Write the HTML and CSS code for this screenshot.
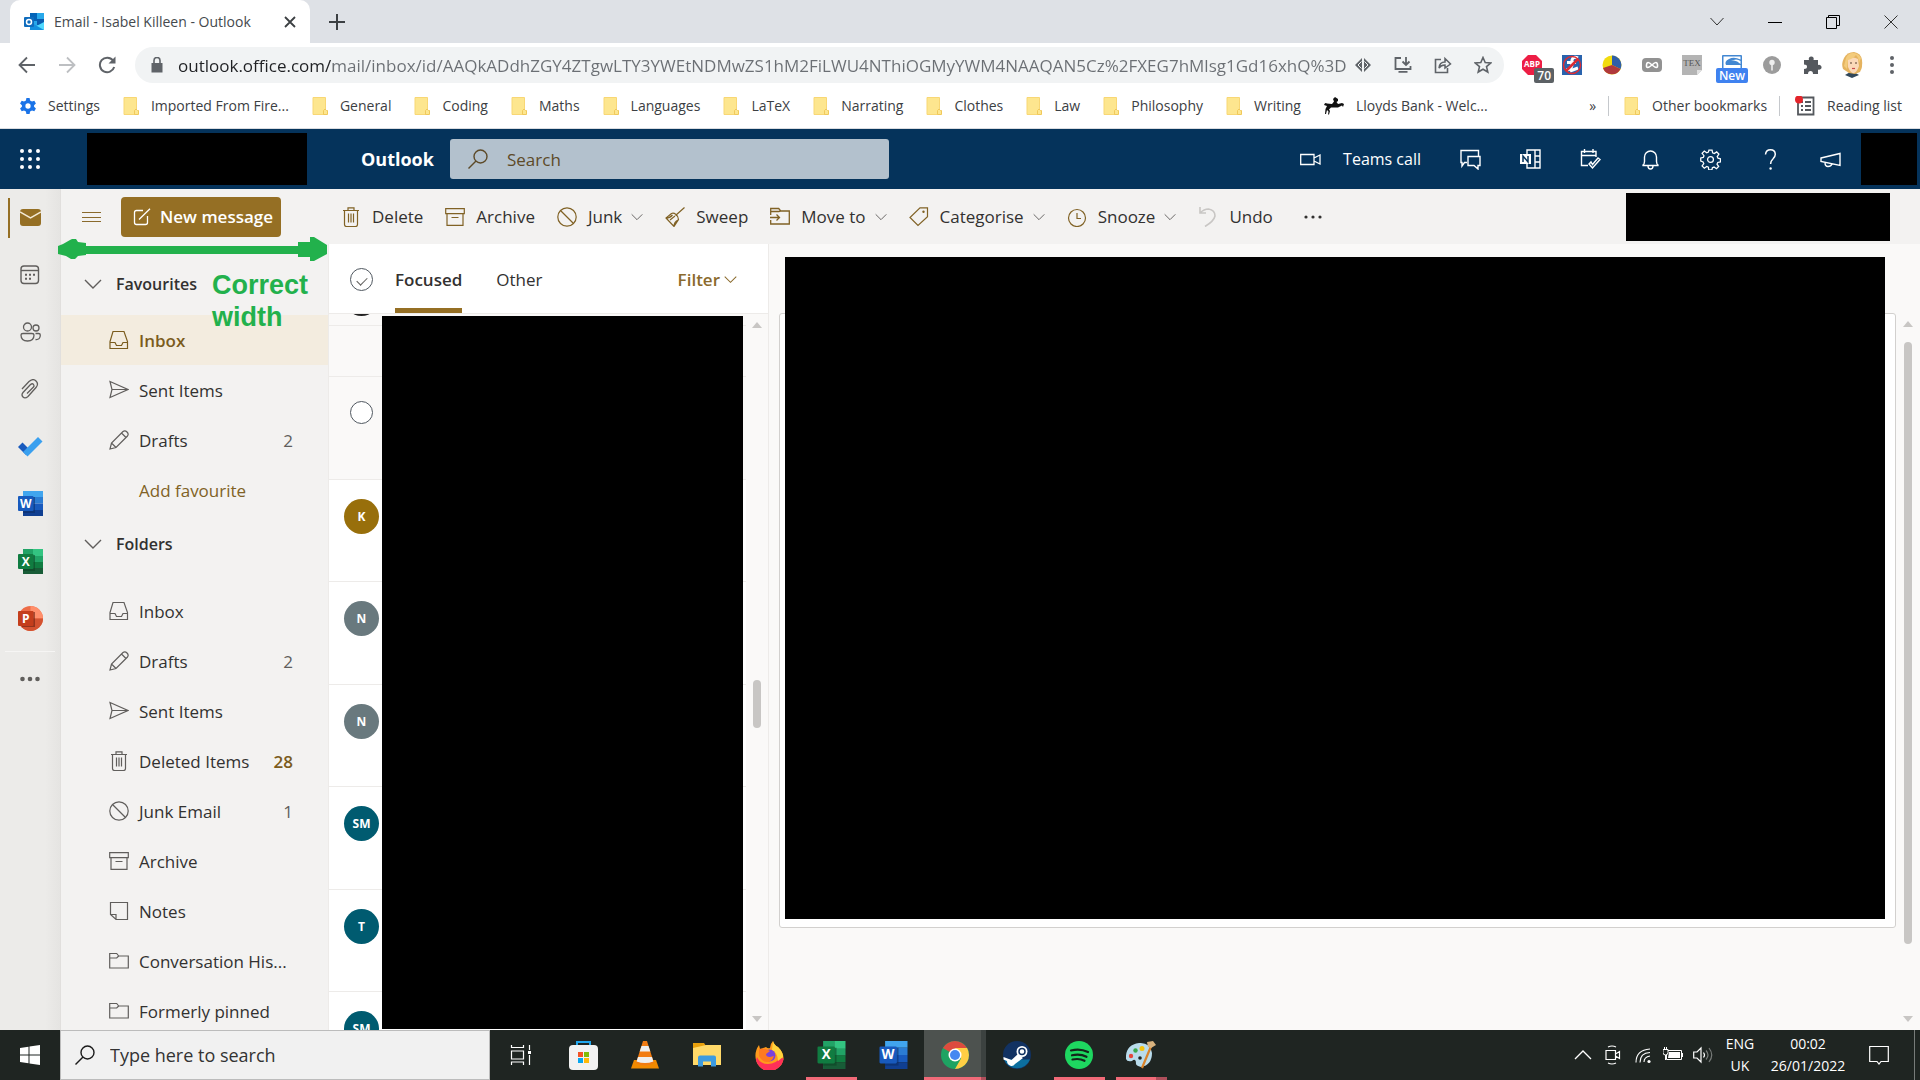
FILE: index.html
```html
<!DOCTYPE html>
<html lang="en-GB">
<head>
  <meta charset="UTF-8" />
  <meta name="viewport" content="width=device-width, initial-scale=1.0" />
  <title>Email - Isabel Killeen - Outlook</title>
  <link rel="stylesheet" href="styles.css">
</head>
<body>
  <!-- Shared icons -->
  <svg class="sprite" aria-hidden="true">
    <symbol id="folder-tab" viewBox="0 0 16 18"><path d="M1 .5h12.500v17H1z" fill="#fde68f" stroke="#f8d775"/><path d="M11.500 17.500v-4q1.500-3 3 0h1v4z" fill="#fde68f" stroke="#f0c95a"/></symbol>
    <symbol id="chevron" viewBox="0 0 18 12"><path d="M1 2l8 8 8-8" fill="none" stroke="currentColor" stroke-width="1.400"/></symbol>
    <symbol id="search" viewBox="0 0 20 20"><circle cx="12.500" cy="7.500" r="6.500" fill="none" stroke="currentColor" stroke-width="1.400"/><path d="M8 12l-7.500 7.500" stroke="currentColor" stroke-width="1.400"/></symbol>
    <symbol id="inbox" viewBox="0 0 20 20"><path d="M1 18.500v-7L4 1.500h11l3.500 10v7zM1 12.500h5l1.500 3h5l1.500-3h4.500" fill="none" stroke="currentColor" stroke-width="1.200"/></symbol>
    <symbol id="sent" viewBox="0 0 20 20"><path d="M1 1.500L19 9.500 1 17.500l2-8zM3 9.500h16" fill="none" stroke="currentColor" stroke-width="1.200"/></symbol>
    <symbol id="draft" viewBox="0 0 20 20"><path d="M1 19l1.500-6L14 1.500q2-1.500 4 .5t.5 4L7 17.500zM2.500 13L7 17.500M12.500 3L17 7.500" fill="none" stroke="currentColor" stroke-width="1.200"/></symbol>
    <symbol id="bin" viewBox="0 0 20 20"><path d="M2 3.500h16M7 3V.8h6V3M3.500 3.500v14q0 2 2 2h9q2 0 2-2v-14M7.500 6.500v9M10 6.500v9M12.500 6.500v9" fill="none" stroke="currentColor" stroke-width="1.200"/></symbol>
    <symbol id="junk" viewBox="0 0 20 20"><circle cx="10" cy="10" r="9.200" fill="none" stroke="currentColor" stroke-width="1.200"/><path d="M3.500 3.500l13 13" stroke="currentColor" stroke-width="1.200"/></symbol>
    <symbol id="archive" viewBox="0 0 20 20"><path d="M.7 1.700h18.600v5H.7zM2 6.700v11.600h16V6.700M6.500 10.500h7" fill="none" stroke="currentColor" stroke-width="1.200"/></symbol>
    <symbol id="note" viewBox="0 0 20 20"><path d="M1.500 1.500h17v17H7l-5.500-5zM7 18.500v-5H1.500" fill="none" stroke="currentColor" stroke-width="1.200"/></symbol>
    <symbol id="folder" viewBox="0 0 20 20"><path d="M.7 2.500h7l2 2.500h9.600v12H.7zM.7 7h7l2-2" fill="none" stroke="currentColor" stroke-width="1.200"/></symbol>
    <symbol id="word" viewBox="0 0 25 25"><path d="M5 0h20v6H5z" fill="#41a5ee"/><path d="M5 6h20v6.500H5z" fill="#2b7cd3"/><path d="M5 12.500h20V19H5z" fill="#185abd"/><path d="M5 19h20v6H5z" fill="#103f91"/><path d="M5 6h12v16H5z" fill="#0b2b63" opacity=".55"/><rect y="5" width="15.500" height="15" rx="1" fill="#185abd"/><text x="7.700" y="16.500" class="logo-letter">W</text></symbol>
    <symbol id="excel" viewBox="0 0 25 25"><path d="M5 0h10v25H5z" fill="#21a366"/><path d="M15 0h10v7H15z" fill="#33c481"/><path d="M15 7h10v6H15z" fill="#21a366"/><path d="M15 13h10v6H15z" fill="#107c41"/><path d="M5 19h20v6H5z" fill="#185c37"/><path d="M5 6h12v16H5z" fill="#0c4125" opacity=".55"/><rect y="5" width="15.500" height="15" rx="1" fill="#107c41"/><text x="7.700" y="16.500" class="logo-letter">X</text></symbol>
    <symbol id="powerpoint" viewBox="0 0 25 25"><circle cx="12.500" cy="12.500" r="12.500" fill="#ed6c47"/><path d="M12.500 0A12.500 12.500 0 0 1 25 12.500H12.500z" fill="#ff8f6b"/><path d="M0 12.500h25a12.500 12.500 0 0 1-25 0z" fill="#d35230"/><path d="M4 6h13v15H4z" fill="#6b2210" opacity=".6"/><rect y="5" width="15.500" height="15" rx="1" fill="#c43e1c"/><text x="7.700" y="16.500" class="logo-letter">P</text></symbol>
  </svg>

  <!-- Browser chrome -->
  <div class="tab-strip">
    <div class="tab">
      <svg width="20" height="20" viewBox="0 0 20 20"><path d="M6 1h14v17H6z" fill="#28a8ea"/><path d="M6 1h7v8H6z" fill="#0364b8"/><path d="M13 7h7v6h-7z" fill="#0a5bb0"/><path d="M5 18l15-8v8z" fill="#50d9ff"/><path d="M6 10l14 8H6z" fill="#1490df"/><rect y="5" width="10" height="10" rx="1" fill="#0f6cbd"/><circle cx="5" cy="10" r="2.500" fill="none" stroke="#fff" stroke-width="1.500"/></svg>
      <span class="tab-title">Email - Isabel Killeen - Outlook</span>
      <button class="plain" aria-label="Close tab"><svg width="12" height="12" viewBox="0 0 12 12"><path d="M1 1l10 10M11 1L1 11" stroke="#3c4043" stroke-width="1.800"/></svg></button>
    </div>
    <button class="plain new-tab" aria-label="New tab"><svg width="16" height="16" viewBox="0 0 16 16"><path d="M8 0v16M0 8h16" stroke="#3c4043" stroke-width="2"/></svg></button>
    <div class="window-controls">
      <button class="plain" aria-label="Search tabs"><svg width="14" height="10" viewBox="0 0 14 10"><path d="M.5 1L7 8l6.500-7" fill="none" stroke="#333"/></svg></button>
      <button class="plain" aria-label="Minimise"><svg width="14" height="14" viewBox="0 0 14 14"><path d="M0 7.500h14" stroke="#000"/></svg></button>
      <button class="plain" aria-label="Restore"><svg width="14" height="14" viewBox="0 0 14 14"><path d="M.5 2.500h10v11H.5zM2.500 2.500v-2h11v10h-3" fill="none" stroke="#000"/></svg></button>
      <button class="plain" aria-label="Close"><svg width="14" height="14" viewBox="0 0 14 14"><path d="M.5.5l13 13M13.500.5l-13 13" stroke="#333"/></svg></button>
    </div>
  </div>

  <div class="toolbar">
    <div class="nav-buttons">
      <button class="plain" aria-label="Back"><svg width="18" height="18" viewBox="0 0 18 18"><path d="M17 9H2M9 1.500L1.500 9 9 16.500" fill="none" stroke="#5f6368" stroke-width="1.800"/></svg></button>
      <button class="plain" aria-label="Forward"><svg width="18" height="18" viewBox="0 0 18 18"><path d="M1 9h15M9 1.500L16.500 9 9 16.500" fill="none" stroke="#bdbfc2" stroke-width="1.800"/></svg></button>
      <button class="plain" aria-label="Reload"><svg width="18" height="18" viewBox="0 0 18 18"><path d="M15 4.500A7.300 7.300 0 1 0 16.200 11" fill="none" stroke="#5f6368" stroke-width="2"/><path d="M17.500.5v7h-7z" fill="#5f6368"/></svg></button>
    </div>
    <div class="omnibox">
      <svg width="12" height="16" viewBox="0 0 12 16"><path d="M.5 6h11v9.500H.5z" fill="#5f6368"/><path d="M3 6V3.500a3 3 0 0 1 6 0V6" fill="none" stroke="#5f6368" stroke-width="1.600"/></svg>
      <input type="text" class="url" aria-label="Address" value="outlook.office.com/mail/inbox/id/AAQkADdhZGY4ZTgwLTY3YWEtNDMwZS1hM2FiLWU4NThiOGMyYWM4NAAQAN5Cz%2FXEG7hMlsg1Gd16xhQ%3D">
      <div class="omni-icons">
        <button class="plain" aria-label="Extension action"><svg width="18" height="18" viewBox="0 0 18 18"><path d="M8 2L1 9l7 7zM10 2l7 7-7 7z" fill="#5f6368"/><path d="M7.500 5.500L4 9l3.500 3.500M10.500 5.500L14 9l-3.500 3.500" fill="none" stroke="#f1f3f4"/></svg></button>
        <button class="plain" aria-label="Install"><svg width="18" height="18" viewBox="0 0 18 18"><path d="M7 2H1.500v11h15v-3M4.500 15.800h9M12 1v7M8.500 5.500L12 9l3.500-3.500" fill="none" stroke="#5f6368" stroke-width="1.800"/></svg></button>
        <button class="plain" aria-label="Share"><svg width="18" height="18" viewBox="0 0 18 18"><path d="M7 3.500H1.500v13h12V12" fill="none" stroke="#5f6368" stroke-width="1.600"/><path d="M5 12q.5-6 6-6V2.500L16.500 8 11 12V9q-4 0-6 3z" fill="none" stroke="#5f6368" stroke-width="1.500"/></svg></button>
        <button class="plain" aria-label="Bookmark"><svg width="18" height="18" viewBox="0 0 18 18"><path d="M9 1.500l2.200 5 5.500.5-4.200 3.600 1.300 5.400L9 13.200 4.200 16l1.300-5.400L1.300 7l5.500-.5z" fill="none" stroke="#5f6368" stroke-width="1.600"/></svg></button>
      </div>
    </div>
    <div class="extensions">
      <button class="plain" aria-label="Adblock Plus"><svg width="20" height="20" viewBox="0 0 20 20"><path d="M6 0h8l6 6v8l-6 6H6l-6-6V6z" fill="#ed1e45"/><text x="10" y="12" class="abp-text">ABP</text></svg><span class="badge badge-grey">70</span></button>
      <button class="plain" aria-label="Blocker"><svg width="20" height="20" viewBox="0 0 20 20"><path d="M0 0h20v20H0z" fill="#2a63ad"/><path d="M16 3q-5-2-6 2v4q0 6-6 6M5 7.500h9M8 16l8-3" fill="none" stroke="#fff" stroke-width="3"/><circle cx="10" cy="10" r="8.500" fill="none" stroke="#dd2c33" stroke-width="1.500"/><path d="M4 16L16 4" stroke="#dd2c33" stroke-width="2.500"/></svg></button>
      <button class="plain" aria-label="Chart"><svg width="20" height="20" viewBox="0 0 20 20"><circle cx="10" cy="10" r="9.500" fill="#f2dc0e"/><path d="M10 10V.5A9.500 9.500 0 0 1 18.500 14z" fill="#2f5ea8"/><path d="M10 10l8.500 4a9.500 9.500 0 0 1-17.500-1z" fill="#b0383c"/></svg></button>
      <button class="plain" aria-label="Infinity"><svg width="20" height="20" viewBox="0 0 20 20"><rect y="3" width="20" height="14" rx="4" fill="#929292"/><path d="M10 10q-5-5-5.500 0t5.500 0q5-5 5.500 0T10 10z" fill="none" stroke="#fff" stroke-width="1.600"/></svg></button>
      <button class="plain" aria-label="TeX"><svg width="20" height="20" viewBox="0 0 20 20"><path d="M0 0h20v15l-5 5H0z" fill="#b4b4b4"/><path d="M20 15l-5 5v-5z" fill="#e0e0e0"/><text x="10" y="11" class="tex-text">TEX</text></svg></button>
      <button class="plain" aria-label="Scribe"><svg width="20" height="20" viewBox="0 0 20 20"><rect width="20" height="20" rx="1" fill="#4287d2"/><path d="M1.500 1.500h17v3Q12 1.500 7 4T4 10h14.500v8h-17z" fill="#fff"/><path d="M9 6q5-2 9.500 3v-3q-4-3-9.500 0z" fill="#fff"/></svg><span class="badge badge-blue">New</span></button>
      <button class="plain" aria-label="Pin"><svg width="20" height="20" viewBox="0 0 20 20"><circle cx="10" cy="10" r="9" fill="#9c9c9c"/><circle cx="10" cy="7.500" r="2.700" fill="#eee"/><path d="M9.200 9h1.600v6L10 16l-.8-1z" fill="#eee"/></svg></button>
      <button class="plain" aria-label="Extensions"><svg width="20" height="20" viewBox="0 0 20 20"><path d="M2 5h5a2.500 2.500 0 1 1 4.500 0H16v5a2.500 2.500 0 1 1 0 4.500V19h-5q0-3-2.500-3T6 19H2v-5q3 0 3-2.200T2 9.500z" fill="#54585d"/></svg></button>
      <button class="plain" aria-label="Profile"><svg width="24" height="26" viewBox="0 0 24 26"><path d="M5 23l7-4 7 4-7 3z" fill="#32485a"/><path d="M3 17Q1 12 4 6 7 0 14 0q7 1 8 8 1 7-2 12l-5 2-6-1z" fill="#e5b35f"/><path d="M8 7q5-3 10 0l1 7q-2 6-5 7t-6-6z" fill="#fbd9b9"/><path d="M8 8q5-1 8-5 3 3 3 8l2-5q-3-5-8-5T6 6L4 14l3 3z" fill="#f3cb7c"/><path d="M10 11h2M15 11h2" stroke="#5b4030"/><path d="M12 16.500h3" stroke="#c94b4b" stroke-width="1.200"/></svg></button>
      <button class="plain" aria-label="Menu"><svg width="20" height="20" viewBox="0 0 20 20"><g fill="#5f6368"><circle cx="10" cy="3" r="2"/><circle cx="10" cy="10" r="2"/><circle cx="10" cy="17" r="2"/></g></svg></button>
    </div>
  </div>

  <nav class="bookmarks">
    <a href="#"><svg width="16" height="18" viewBox="0 0 20 20"><path d="M8 0h4l.6 3 2.400 1.400 2.900-1 2 3.400L17.600 9v2l2.300 2.200-2 3.400-2.900-1-2.400 1.400-.6 3H8l-.6-3L5 15.600l-2.900 1-2-3.400L2.400 11V9L.1 6.800l2-3.400 2.900 1L7.400 3z" fill="#1a73e8"/><circle cx="10" cy="10" r="3.300" fill="#fff"/></svg>Settings</a>
    <a href="#"><svg width="16" height="18"><use href="#folder-tab"/></svg>Imported From Fire...</a>
    <a href="#"><svg width="16" height="18"><use href="#folder-tab"/></svg>General</a>
    <a href="#"><svg width="16" height="18"><use href="#folder-tab"/></svg>Coding</a>
    <a href="#"><svg width="16" height="18"><use href="#folder-tab"/></svg>Maths</a>
    <a href="#"><svg width="16" height="18"><use href="#folder-tab"/></svg>Languages</a>
    <a href="#"><svg width="16" height="18"><use href="#folder-tab"/></svg>LaTeX</a>
    <a href="#"><svg width="16" height="18"><use href="#folder-tab"/></svg>Narrating</a>
    <a href="#"><svg width="16" height="18"><use href="#folder-tab"/></svg>Clothes</a>
    <a href="#"><svg width="16" height="18"><use href="#folder-tab"/></svg>Law</a>
    <a href="#"><svg width="16" height="18"><use href="#folder-tab"/></svg>Philosophy</a>
    <a href="#"><svg width="16" height="18"><use href="#folder-tab"/></svg>Writing</a>
    <a href="#"><svg width="20" height="18" viewBox="0 0 20 18"><path d="M0 8q1-3 3-1.500L8 7l2-2.500L9 2l2-2 3 2v2l-1.500 1L14 7l4-1 2 1-1 3-1-1.500-4 2-3 0-4 0-2 2 1 1.500-1 3.500H4l.5-3L3 13l-1 4H1l.5-5L3 9z" fill="#111"/></svg>Lloyds Bank - Welc...</a>
    <div class="bookmarks-end">
      <button class="plain" aria-label="More bookmarks">»</button>
      <a class="ruled" href="#"><svg width="16" height="18"><use href="#folder-tab"/></svg>Other bookmarks</a>
      <a class="ruled" href="#"><svg width="20" height="20" viewBox="0 0 20 20"><path d="M3 1.500h15.500v17H3z" fill="none" stroke="#54585d" stroke-width="1.800"/><path d="M6 6h2M10 6h6M6 10h2M10 10h6M6 14h2M10 14h6" stroke="#54585d" stroke-width="1.800"/><circle cx="4" cy="3.500" r="4" fill="#e3242b"/></svg>Reading list</a>
    </div>
  </nav>

  <!-- Outlook header -->
  <header class="suite-header">
    <button class="plain waffle" aria-label="App launcher"><svg width="20" height="20" viewBox="0 0 20 20"><g fill="#fff"><circle cx="2" cy="2" r="2"/><circle cx="10" cy="2" r="2"/><circle cx="18" cy="2" r="2"/><circle cx="2" cy="10" r="2"/><circle cx="10" cy="10" r="2"/><circle cx="18" cy="10" r="2"/><circle cx="2" cy="18" r="2"/><circle cx="10" cy="18" r="2"/><circle cx="18" cy="18" r="2"/></g></svg></button>
    <div class="redacted redacted-org"></div>
    <h1>Outlook</h1>
    <label class="mail-search">
      <svg width="20" height="20"><use href="#search"/></svg>
      <input type="search" placeholder="Search" aria-label="Search">
    </label>
    <div class="suite-actions">
      <button class="plain teams-call"><svg width="21" height="21" viewBox="0 0 21 21"><path d="M.7 5.500H14v10H.7zM14 9l6-3v9l-6-3" fill="none" stroke="#fff" stroke-width="1.300"/></svg>Teams call</button>
      <button class="plain suite-icon" aria-label="Chat"><svg width="21" height="21" viewBox="0 0 21 21"><path d="M7 13.500H4.500L2 17v-3.500H1v-12h17.500V7M8 7.500h12v9h-2V20l-4-3.500H8z" fill="none" stroke="#fff" stroke-width="1.400"/></svg></button>
      <button class="plain suite-icon" aria-label="OneNote"><svg width="21" height="21" viewBox="0 0 21 21"><path d="M7 5V1h13v18H7v-4M15 1v18M15 7h5M15 13h5" fill="none" stroke="#fff" stroke-width="1.400"/><path d="M0 5h11v10H0z" fill="#fff"/><path d="M3 13V7l5 6V7" fill="none" stroke="#05335b" stroke-width="1.500"/></svg></button>
      <button class="plain suite-icon" aria-label="My Day"><svg width="21" height="21" viewBox="0 0 21 21"><path d="M8 16.500H1.500v-14H16V8M1.500 6.500H16M4.500 0v4M13 0v4M9 15l3.500 4L20 10.500 18 9l-5.500 6.500L11 13z" fill="none" stroke="#fff" stroke-width="1.400"/></svg></button>
      <button class="plain suite-icon" aria-label="Notifications"><svg width="21" height="21" viewBox="0 0 21 21"><path d="M2.500 16.500q2-1 2-4V8a6 6 0 0 1 12 0v4.500q0 3 2 4zM8 17q0 3 2.500 3T13 17" fill="none" stroke="#fff" stroke-width="1.400"/></svg></button>
      <button class="plain suite-icon" aria-label="Settings"><svg width="21" height="21" viewBox="0 0 20 20"><path d="M8.500 1h3l.5 2.700 1.600.7 2.300-1.600 2.100 2.100-1.600 2.300.7 1.600 2.400.5v3l-2.600.5-.7 1.600 1.600 2.300-2.100 2.100-2.300-1.600-1.600.7-.5 2.100h-3L8 17.400l-1.600-.7-2.300 1.600L2 16.200l1.600-2.300-.7-1.600L.7 11.500v-3l2.400-.5.7-1.600L2 4.100 4.100 2l2.300 1.600 1.600-.7z" fill="none" stroke="#fff" stroke-width="1.200"/><circle cx="10" cy="10" r="2.800" fill="none" stroke="#fff" stroke-width="1.200"/></svg></button>
      <button class="plain suite-icon" aria-label="Help"><svg width="21" height="21" viewBox="0 0 21 21"><path d="M5.500 5.500Q6 .8 10.500.8t4.800 4.400q0 2.500-2.400 4.800-2.300 2-2.300 5" fill="none" stroke="#fff" stroke-width="1.500"/><circle cx="10.600" cy="19.500" r="1.200" fill="#fff"/></svg></button>
      <button class="plain suite-icon" aria-label="What's new"><svg width="21" height="21" viewBox="0 0 21 21"><path d="M1 9l19-4.500v12L1 12.500zM5 13.500q0 4 3 4t4-2.500" fill="none" stroke="#fff" stroke-width="1.400"/></svg></button>
      <div class="redacted redacted-avatar"></div>
    </div>
  </header>

  <div class="app">
    <!-- App rail -->
    <nav class="rail">
      <div class="rail-apps">
        <a class="active" href="#" aria-label="Mail"><svg width="21" height="17" viewBox="0 0 21 17"><rect width="21" height="17" rx="3" fill="#956f24"/><path d="M0 3l10.500 6L21 3" fill="none" stroke="#f3e9d5" stroke-width="1.500"/></svg></a>
        <a href="#" aria-label="Calendar"><svg width="20" height="20" viewBox="0 0 20 20"><rect x="1" y="1" width="17.500" height="17.500" rx="3" fill="none" stroke="#605e5c" stroke-width="1.400"/><path d="M1 5.500h17.500" stroke="#605e5c" stroke-width="1.400"/><path d="M5 9.700h2M9 9.700h2M13 9.700h2M5 13.700h2M9 13.700h2" stroke="#605e5c" stroke-width="2"/></svg></a>
        <a href="#" aria-label="People"><svg width="21" height="20" viewBox="0 0 21 20"><g fill="none" stroke="#605e5c" stroke-width="1.300"><circle cx="7.500" cy="5" r="4"/><circle cx="16" cy="6" r="3"/><path d="M1 13q0-1.500 2-1.500h9q2 0 2 1.500 0 6-6.500 6T1 13zM15.500 11.500h3q1.800 0 1.800 1.500 0 5-4.800 4.500"/></g></svg></a>
        <a href="#" aria-label="Files"><svg width="20" height="20" viewBox="0 0 20 20"><path d="M2 10l7-7.500q4-3.500 7-.5t0 6.500l-8 9q-3 2.500-5 .5t0-4.500l7.500-8q2-1.500 3 0t0 2.500L7 14.500" fill="none" stroke="#605e5c" stroke-width="1.300"/></svg></a>
        <a href="#" aria-label="To Do"><svg width="25" height="20" viewBox="0 0 25 20"><path d="M0 10l4.500-4.500 8 8L8 18z" fill="#195abd"/><path d="M5 15L20 0l4.500 4.500L9.500 19.500z" fill="#3aa0ef"/></svg></a>
        <a href="#" aria-label="Word"><svg width="25" height="25"><use href="#word"/></svg></a>
        <a href="#" aria-label="Excel"><svg width="25" height="25"><use href="#excel"/></svg></a>
        <a href="#" aria-label="PowerPoint"><svg width="25" height="25"><use href="#powerpoint"/></svg></a>
      </div>
      <button class="plain rail-more" aria-label="More apps"><svg width="20" height="6" viewBox="0 0 20 6"><g fill="#605e5c"><circle cx="2.500" cy="3" r="2.300"/><circle cx="10" cy="3" r="2.300"/><circle cx="17.500" cy="3" r="2.300"/></g></svg></button>
    </nav>

    <div class="mail">
      <div class="command-bar">
        <button class="plain hamburger" aria-label="Toggle folders"><svg width="20" height="12" viewBox="0 0 20 12"><path d="M0 1.500h19M0 6.500h19M0 10.500h19" stroke="#8a6a2c" stroke-width="1.100"/></svg></button>
        <button class="new-message"><svg width="18" height="18" viewBox="0 0 18 18"><path d="M10 2.500H3.500q-2 0-2 2v10q0 2 2 2h9q2 0 2-2V8M6 11.500L17 .8" fill="none" stroke="#fff" stroke-width="1.300"/></svg>New message</button>
        <div class="commands">
          <button class="plain"><svg width="20" height="20"><use href="#bin"/></svg>Delete</button>
          <button class="plain"><svg width="20" height="20"><use href="#archive"/></svg>Archive</button>
          <button class="plain"><svg width="20" height="20"><use href="#junk"/></svg>Junk<svg class="caret" width="12" height="8"><use href="#chevron"/></svg></button>
          <button class="plain"><svg width="20" height="20" viewBox="0 0 20 20"><path d="M19.500.5l-9 8M6.500 6.500L1 11l8 8.500 4.500-7q0-3-2.500-5t-4.500-1zM1 11q4 0 6.500-3M9 19.500Q9 15 13 13M5 13l5-4" fill="none" stroke="currentColor" stroke-width="1.200"/></svg>Sweep</button>
          <button class="plain"><svg width="20" height="20" viewBox="0 0 20 20"><path d="M.7 8V1.500h8l2 2.500h8.600v13H.7V13M.7 4.500h8l2-.5M0 10.500h9M6.500 7.500l3 3-3 3" fill="none" stroke="currentColor" stroke-width="1.300"/></svg>Move to<svg class="caret" width="12" height="8"><use href="#chevron"/></svg></button>
          <button class="plain"><svg width="20" height="20" viewBox="0 0 20 20"><path d="M11 .8h7.500v9L9 18.500 1 10.500z" fill="none" stroke="currentColor" stroke-width="1.200"/><circle cx="14.500" cy="4.800" r="1.200" fill="currentColor"/></svg>Categorise<svg class="caret" width="12" height="8"><use href="#chevron"/></svg></button>
          <button class="plain"><svg width="20" height="20" viewBox="0 0 20 20"><circle cx="10" cy="11" r="8.500" fill="none" stroke="currentColor" stroke-width="1.200"/><path d="M10 6v5.500h4" fill="none" stroke="currentColor" stroke-width="1.200"/></svg>Snooze<svg class="caret" width="12" height="8"><use href="#chevron"/></svg></button>
          <button class="plain"><svg class="muted" width="20" height="20" viewBox="0 0 20 20"><path d="M2 0v6h6M2 6q4-4 8.500-4 6.500 1 6.500 7Q16 14 7 19.500" fill="none" stroke="currentColor" stroke-width="1.600"/></svg>Undo</button>
          <button class="plain" aria-label="More commands"><svg class="dots" width="20" height="6" viewBox="0 0 20 6"><g fill="currentColor"><circle cx="3" cy="3" r="1.600"/><circle cx="10" cy="3" r="1.600"/><circle cx="17" cy="3" r="1.600"/></g></svg></button>
        </div>
        <div class="redacted redacted-command"></div>
      </div>

      <div class="panes">
        <!-- Folder pane -->
        <nav class="folders">
          <button class="plain group"><svg width="18" height="12"><use href="#chevron"/></svg>Favourites</button>
          <a class="selected" href="#"><svg width="20" height="20"><use href="#inbox"/></svg>Inbox</a>
          <a href="#"><svg width="20" height="20"><use href="#sent"/></svg>Sent Items</a>
          <a href="#"><svg width="20" height="20"><use href="#draft"/></svg>Drafts<span class="count">2</span></a>
          <a class="add" href="#">Add favourite</a>
          <button class="plain group group-folders"><svg width="18" height="12"><use href="#chevron"/></svg>Folders</button>
          <a href="#"><svg width="20" height="20"><use href="#inbox"/></svg>Inbox</a>
          <a href="#"><svg width="20" height="20"><use href="#draft"/></svg>Drafts<span class="count">2</span></a>
          <a href="#"><svg width="20" height="20"><use href="#sent"/></svg>Sent Items</a>
          <a href="#"><svg width="20" height="20"><use href="#bin"/></svg>Deleted Items<span class="count count-unread">28</span></a>
          <a href="#"><svg width="20" height="20"><use href="#junk"/></svg>Junk Email<span class="count">1</span></a>
          <a href="#"><svg width="20" height="20"><use href="#archive"/></svg>Archive</a>
          <a href="#"><svg width="20" height="20"><use href="#note"/></svg>Notes</a>
          <a href="#"><svg width="20" height="20"><use href="#folder"/></svg>Conversation His...</a>
          <a href="#"><svg width="20" height="20"><use href="#folder"/></svg>Formerly pinned</a>

          <div class="annotation">
            <svg class="annotation-arrow" width="269" height="24" viewBox="0 0 269 24"><path d="M0 9l5-2 7-4 2-1h4l2 3 8 1v3h212V5h12V0h4l13 8v9l-13 7h-4v-4h-12v-3H28v1l-8 1-3 3h-4l-5-3-8-2z" fill="#22b14c"/></svg>
            <p class="annotation-text">Correct<br>width</p>
          </div>
        </nav>

        <!-- Message list -->
        <section class="message-list">
          <div class="list-header">
            <input type="checkbox" class="check check-all" aria-label="Select all">
            <button class="plain pivot pivot-active">Focused</button>
            <button class="plain pivot">Other</button>
            <button class="plain filter">Filter<svg width="13" height="9"><use href="#chevron"/></svg></button>
          </div>
          <div class="list-body">
            <ul class="messages">
              <li class="tinted row-cut"><span class="avatar avatar-dark"></span></li>
              <li class="tinted row-short"></li>
              <li class="tinted"><input type="checkbox" class="check" aria-label="Select message"></li>
              <li><span class="avatar avatar-gold">K</span></li>
              <li><span class="avatar avatar-grey">N</span></li>
              <li><span class="avatar avatar-grey">N</span></li>
              <li><span class="avatar avatar-teal">SM</span></li>
              <li><span class="avatar avatar-teal">T</span></li>
              <li><span class="avatar avatar-teal">SM</span></li>
            </ul>
            <div class="scrollbar list-scroll"><i class="arrow-up"></i><i class="thumb"></i><i class="arrow-down"></i></div>
            <div class="redacted redacted-list"></div>
          </div>
        </section>

        <!-- Reading pane -->
        <main class="reading">
          <article class="mail-card"><div class="redacted redacted-mail"></div></article>
          <div class="scrollbar reading-scroll"><i class="arrow-up"></i><i class="thumb"></i><i class="arrow-down"></i></div>
        </main>
      </div>
    </div>
  </div>

  <!-- Windows taskbar -->
  <footer class="taskbar">
    <button class="plain start" aria-label="Start"><svg width="20" height="20" viewBox="0 0 20 20"><path d="M0 3l8.500-1.300v7.800H0zM9.500 1.500L20 0v9.500H9.500zM0 10.500h8.500v7.800L0 17zM9.500 10.500H20V20l-10.500-1.500z" fill="#fff"/></svg></button>
    <label class="task-search">
      <svg width="20" height="20"><use href="#search"/></svg>
      <input type="search" placeholder="Type here to search" aria-label="Type here to search">
    </label>
    <div class="task-apps">
      <button class="plain" aria-label="Task view"><svg width="22" height="20" viewBox="0 0 22 20"><path d="M1.500 0v2.500h12V0M1.500 20v-3h12v3M1.500 6h12v8h-12zM19.500 0v5M19.500 10v10" fill="none" stroke="#fff" stroke-width="1.200"/><path d="M18 6h3v3h-3z" fill="#fff"/></svg></button>
      <button class="plain" aria-label="Microsoft Store"><svg width="29" height="29" viewBox="0 0 29 29"><path d="M8 5V1h13v4" fill="none" stroke="#22a7ee" stroke-width="2"/><rect y="4" width="29" height="25" rx="4" fill="#f2f2f2"/><path d="M9 11h5v5H9z" fill="#f35325"/><path d="M15 11h5v5h-5z" fill="#81bc06"/><path d="M9 17h5v5H9z" fill="#05a6f0"/><path d="M15 17h5v5h-5z" fill="#ffba08"/></svg></button>
      <button class="plain" aria-label="VLC"><svg width="28" height="28" viewBox="0 0 28 28"><path d="M3 19h22l3 8.500H0z" fill="#f38b00"/><path d="M12 0h4l7 22q-9 5-18 0z" fill="#f27c12"/><path d="M10.500 5h7l1.800 5.500H8.700zM7 16h14l1.400 4.500q-8.400 3-16.800 0z" fill="#efefef"/></svg></button>
      <button class="plain" aria-label="File Explorer"><svg width="28" height="24" viewBox="0 0 28 24"><path d="M0 0h11l2 3v3H0z" fill="#e8a00c"/><path d="M0 5l13-3h15v20H0z" fill="#ffd969"/><path d="M5 23.500v-9q0-2 2-2h14q2 0 2 2v9h-5v-5h-8v5z" fill="#3d9be0"/></svg></button>
      <button class="plain" aria-label="Firefox"><svg width="29" height="29" viewBox="0 0 29 29"><path d="M18 0q1 4 5 6 6 6 5.500 12A14 14 0 0 1 1 19Q-1 11 4 4l1 4q3-1 6-2 2 2 4 1 0-4 3-7z" fill="#ff9b1c"/><path d="M2 16q3 7 11 7t13-7l2.500 2A14 14 0 0 1 1 19z" fill="#ff3058"/><path d="M18 0q1 4 5 6 5 5 5 10l-5 4q0-8-6-11z" fill="#ffd43d"/><circle cx="14.500" cy="14.500" r="6" fill="#7a42dc"/><path d="M4 8q4-1 7 0l4 2-4 3q0 3 4 3l4-1q-2 6-7 6T4 15z" fill="#ff7a1f"/></svg></button>
      <button class="plain running" aria-label="Excel"><svg width="29" height="28"><use href="#excel"/></svg></button>
      <button class="plain" aria-label="Word"><svg width="29" height="28"><use href="#word"/></svg></button>
      <button class="plain running current" aria-label="Chrome"><svg width="28" height="28" viewBox="0 0 28 28"><circle cx="14" cy="14" r="14" fill="#1ea362"/><path d="M14 14L1.900 7A14 14 0 0 1 26.100 7z" fill="#dd4b3e"/><path d="M14 7h12.100A14 14 0 0 1 14 28l6-10.500z" fill="#ffce44"/><circle cx="14" cy="14" r="6.500" fill="#fff"/><circle cx="14" cy="14" r="5" fill="#4688f1"/></svg></button>
      <button class="plain" aria-label="Steam"><svg width="28" height="28" viewBox="0 0 28 28"><circle cx="14" cy="14" r="14" fill="#123262"/><path d="M1 18.500h26a14 14 0 0 1-26 0z" fill="#0c6f9f"/><path d="M.5 16l8 3 6.500-6 5 4-8 6q-2 3-5 1.500T4 20l-3.500-1.500z" fill="#fff"/><circle cx="19" cy="10.500" r="5.500" fill="#fff"/><circle cx="19" cy="10.500" r="3" fill="none" stroke="#123262" stroke-width="1.500"/></svg></button>
      <button class="plain running" aria-label="Spotify"><svg width="28" height="28" viewBox="0 0 28 28"><circle cx="14" cy="14" r="14" fill="#1ed760"/><path d="M6 9.500q9-2.500 17 1.500M7 14.300q8-2 14.500 1.500M7.500 18.500q7-1.500 12 1.300" fill="none" stroke="#14251b" stroke-width="2.200" stroke-linecap="round"/></svg></button>
      <button class="plain running stacked" aria-label="Paint"><svg width="30" height="28" viewBox="0 0 30 28"><path d="M13 2Q24 1 26 12q0 12-11 14-6-1-5-5-1-4-4-1-5 1-6-2Q-1 4 13 2z" fill="#b9dcec"/><circle cx="5" cy="15" r="2.200" fill="#e3473c"/><circle cx="9.500" cy="9.500" r="2.200" fill="#3aa84c"/><circle cx="16" cy="7.500" r="2.500" fill="#f4c20d"/><circle cx="14" cy="17" r="1.800" fill="#1f2522"/><path d="M26 3L16 27" stroke="#d9832b" stroke-width="2.200"/><path d="M21 1l6-1 3 4-5 3-3-1z" fill="#d8b27e"/></svg></button>
    </div>
    <div class="tray">
      <button class="plain" aria-label="Hidden icons"><svg width="18" height="12" viewBox="0 0 18 12"><path d="M1 10l8-8 8 8" fill="none" stroke="#fff" stroke-width="1.300"/></svg></button>
      <button class="plain" aria-label="Meet now"><svg width="18" height="20" viewBox="0 0 18 20"><path d="M2 5.500h9.500v9H2zM11.500 9l4-2.500v7l-4-2.500M4 2q4-2 8 0M4 18q4 2 8 0" fill="none" stroke="#fff" stroke-width="1.200"/></svg></button>
      <button class="plain" aria-label="Wi-Fi"><svg width="18" height="20" viewBox="0 0 18 20"><circle cx="15" cy="16.500" r="1.600" fill="#fff"/><path d="M10 17q0-5 6-6M6 17.500Q6 8 16 7.500M2 17.500Q2 5 16 4" fill="none" stroke="#fff" stroke-width="1.100"/></svg></button>
      <button class="plain" aria-label="Battery"><svg width="20" height="16" viewBox="0 0 20 16"><path d="M3.500 3.500h15v9h-15zM19.500 6v4" fill="none" stroke="#fff"/><path d="M6 5h11v6H5z" fill="#fff"/><path d="M0 2.500h5v3Q5 8 2.500 8T0 5.500zM1.500 0v3M3.500 0v3M2.500 8v5" fill="#1f2522" stroke="#fff"/></svg></button>
      <button class="plain" aria-label="Volume"><svg width="20" height="18" viewBox="0 0 20 18"><path d="M.7 6H4l4-4v14l-4-4H.7zM10.500 6.500q2 2.500 0 5" fill="none" stroke="#fff" stroke-width="1.200"/><path d="M13 4.500q4 4.500 0 9M16 2q5.500 7 0 14" fill="none" stroke="#777b79" stroke-width="1.200"/></svg></button>
      <button class="plain language">ENG<br>UK</button>
      <button class="plain clock">00:02<br>26/01/2022</button>
      <button class="plain notice" aria-label="Notifications"><svg width="20" height="20" viewBox="0 0 20 20"><path d="M.7 1.500h18.600v15H12L10 19l-2-2.500H.7z" fill="none" stroke="#fff" stroke-width="1.200"/></svg></button>
    </div>
  </footer>
</body>
</html>
```

FILE: styles.css
```css
:root {
  --gold: #956f24;
  --ink: #323130;
  --grey: #605e5c;
  --navy: #05335b;
  --line: #edebe9;
  --pane: #f3f2f1;
  --canvas: #faf9f8;
}

* {
  box-sizing: border-box;
  margin: 0;
  padding: 0;
  font-family: "Open Sans", "Noto Sans", sans-serif;
}

body {
  display: flex;
  flex-direction: column;
  height: 100vh;
  overflow: hidden;
  background-color: #fff;
  color: var(--ink);
  font-size: 17px;
}

a {
  color: inherit;
  text-decoration: none;
}

svg {
  display: block;
  flex-shrink: 0;
}

input {
  min-width: 0;
  border: none;
  background: none;
  outline: none;
}

.sprite {
  display: none;
}

.plain {
  display: flex;
  align-items: center;
  border: none;
  background: none;
  color: inherit;
  font-size: inherit;
  cursor: pointer;
}

.redacted {
  background-color: #000;
}

.logo-letter {
  font: bold 12px "Open Sans", sans-serif;
  fill: #fff;
  text-anchor: middle;
}

.abp-text {
  font: bold 8px "Open Sans", sans-serif;
  fill: #fff;
  text-anchor: middle;
}

.tex-text {
  font: 9px "Liberation Serif", serif;
  fill: #555;
  text-anchor: middle;
}

/* Browser chrome */
.tab-strip {
  display: flex;
  align-items: center;
  flex-shrink: 0;
  height: 43px;
  padding-left: 10px;
  background-color: #dee1e6;
}

.tab {
  display: flex;
  align-items: center;
  align-self: stretch;
  width: 300px;
  padding: 0 14px;
  gap: 10px;
  border-radius: 10px 10px 0 0;
  background-color: #fff;
  color: #45494d;
  font-size: 14px;
}

.tab-title {
  flex: 1;
  white-space: nowrap;
}

.new-tab {
  margin-left: 19px;
}

.window-controls {
  display: flex;
  margin-left: auto;
  height: 36px;
}

.window-controls .plain {
  justify-content: center;
  width: 58px;
}

.toolbar {
  display: flex;
  align-items: center;
  flex-shrink: 0;
  height: 44px;
  padding: 0 8px;
}

.nav-buttons {
  display: flex;
  gap: 22px;
  padding-left: 10px;
  width: 127px;
}

.omnibox {
  display: flex;
  align-items: center;
  flex: 1;
  height: 36px;
  padding: 0 12px 0 16px;
  border-radius: 18px;
  background-color: #f1f3f4;
}

.url {
  flex: 1;
  margin-left: 15px;
  font-size: 17px;
  color: transparent;
  background: linear-gradient(90deg, #202124 155px, #6b6f74 155px);
  background-clip: text;
  -webkit-background-clip: text;
}

.omni-icons {
  display: flex;
  gap: 22px;
  margin-left: 2px;
}

.extensions {
  display: flex;
  padding-left: 8px;
}

.extensions .plain {
  position: relative;
  justify-content: center;
  width: 40px;
  height: 36px;
}

.badge {
  position: absolute;
  right: 0;
  bottom: 0;
  padding: 0 3px;
  border-radius: 2px;
  color: #fff;
  font-size: 12px;
  font-weight: 600;
  line-height: 15px;
}

.badge-grey {
  right: -2px;
  background-color: #5c6165;
}

.badge-blue {
  right: 4px;
  background-color: #3f82f0;
}

.bookmarks {
  display: flex;
  align-items: center;
  flex-shrink: 0;
  gap: 23px;
  height: 42px;
  padding: 0 18px 4px 20px;
  border-bottom: 1px solid #dadce0;
  color: #3c4043;
  font-size: 14px;
  white-space: nowrap;
}

.bookmarks a {
  display: flex;
  align-items: center;
  gap: 12px;
}

.bookmarks-end {
  display: flex;
  gap: 12px;
  margin-left: auto;
}

.ruled {
  height: 20px;
  padding-left: 15px;
  border-left: 1px solid #c5c8cc;
}

/* Outlook header */
.suite-header {
  display: flex;
  align-items: center;
  flex-shrink: 0;
  height: 60px;
  background-color: var(--navy);
  color: #fff;
}

.waffle {
  justify-content: center;
  width: 60px;
}

.redacted-org {
  width: 220px;
  height: 52px;
  margin-left: 27px;
}

.suite-header h1 {
  width: 89px;
  margin-left: 54px;
  font-size: 18px;
  font-weight: 700;
}

.mail-search {
  display: flex;
  align-items: center;
  gap: 19px;
  width: 439px;
  height: 40px;
  padding: 0 18px;
  border-radius: 3px;
  background-color: #b3c1cd;
  color: #5d4a28;
}

.mail-search input {
  flex: 1;
  font-size: 17px;
}

.mail-search input::placeholder {
  color: #5d4a28;
  opacity: 1;
}

.suite-actions {
  display: flex;
  align-items: center;
  margin-left: auto;
  padding-right: 3px;
}

.teams-call {
  gap: 22px;
  margin-right: 20px;
  font-size: 16px;
}

.suite-icon {
  justify-content: center;
  width: 60px;
  padding-right: 2px;
}

.redacted-avatar {
  width: 56px;
  height: 52px;
}

/* App rail */
.app {
  display: flex;
  flex: 1;
  min-height: 0;
}

.rail {
  width: 61px;
  flex-shrink: 0;
  border-right: 1px solid #e1dfdd;
  background: linear-gradient(90deg, #ecebe9 45px, #e5e4e2 100%);
}

.rail-apps {
  display: grid;
  grid-auto-rows: 1fr;
  height: 458px;
  margin-bottom: 4px;
}

.rail-apps a {
  display: flex;
  align-items: center;
  justify-content: center;
}

.rail-apps .active {
  position: relative;
}

.rail-apps .active::before {
  content: "";
  position: absolute;
  left: 8px;
  top: 9px;
  width: 2px;
  height: 40px;
  background-color: var(--gold);
}

.rail-more {
  justify-content: center;
  width: 50px;
  height: 54px;
  margin-left: 5px;
  border-top: 1px solid #f6f5f4;
}

/* Command bar */
.mail {
  display: flex;
  flex-direction: column;
  flex: 1;
  min-width: 0;
  background-color: var(--pane);
}

.command-bar {
  display: flex;
  align-items: center;
  flex-shrink: 0;
  height: 55px;
  padding: 0 30px 0 21px;
}

.new-message {
  display: flex;
  align-items: center;
  gap: 9px;
  width: 160px;
  height: 40px;
  margin-left: 19px;
  padding-left: 12px;
  border: none;
  border-radius: 4px;
  background-color: var(--gold);
  color: #fff;
  font-size: 17px;
  font-weight: 600;
  white-space: nowrap;
  cursor: pointer;
}

.commands {
  display: flex;
  gap: 22px;
  margin-left: 60px;
  white-space: nowrap;
}

.commands .plain {
  gap: 11px;
}

.commands svg {
  color: #806225;
}

.commands .caret {
  margin-left: -2px;
  color: var(--grey);
}

.commands .muted {
  color: #c8c6c4;
}

.commands .dots {
  margin-left: 8px;
  color: var(--ink);
}

.redacted-command {
  width: 264px;
  height: 48px;
  margin-left: auto;
}

.panes {
  display: flex;
  flex: 1;
  min-height: 0;
}

/* Folder pane */
.folders {
  position: relative;
  width: 268px;
  height: 100%;
  flex-shrink: 0;
  padding-top: 11px;
  border-right: 1px solid var(--line);
}

.folders > a {
  display: flex;
  align-items: center;
  gap: 10px;
  height: 50px;
  padding: 0 35px 0 48px;
  white-space: nowrap;
}

.folders svg {
  color: var(--grey);
}

.folders > .selected {
  background-color: #f3ecdf;
  color: #7b5c1d;
  font-weight: 600;
}

.folders > .selected svg {
  color: #7b5c1d;
}

.folders > .add {
  padding-left: 78px;
  color: #806225;
}

.group {
  gap: 14px;
  width: 100%;
  height: 60px;
  padding: 0 0 3px 23px;
  font-size: 16px;
  font-weight: 600;
}

.group-folders {
  margin-bottom: 11px;
}

.count {
  margin-left: auto;
  color: var(--grey);
}

.count-unread {
  color: #7b5c1d;
  font-weight: 600;
}

.annotation {
  position: absolute;
  top: -7px;
  left: -3px;
}

.annotation-text {
  padding: 8px 0 0 154px;
  color: #22b14c;
  font: bold 27px/32px "Liberation Sans", Arial, sans-serif;
}

/* Message list */
.message-list {
  display: flex;
  flex-direction: column;
  width: 440px;
  flex-shrink: 0;
  border-right: 1px solid var(--line);
  background-color: var(--canvas);
}

.list-header {
  display: flex;
  align-items: center;
  flex-shrink: 0;
  height: 70px;
  padding: 2px 31px 0 21px;
  border-bottom: 1px solid var(--line);
  background-color: #fff;
}

.check {
  appearance: none;
  width: 23px;
  height: 23px;
  border: 1px solid #505860;
  border-radius: 50%;
  background-color: #fff;
}

.check-all {
  display: grid;
  place-items: center;
  margin-right: 22px;
}

.check-all::before {
  content: "";
  width: 9px;
  height: 5px;
  border: solid var(--grey);
  border-width: 0 0 1px 1px;
  transform: rotate(-45deg);
}

.pivot {
  height: 100%;
  margin-right: 34px;
  border-top: 5px solid transparent;
  border-bottom: 5px solid transparent;
}

.pivot-active {
  border-bottom-color: var(--gold);
  font-weight: 600;
}

.filter {
  gap: 4px;
  margin-left: auto;
  color: #8a6a2c;
  font-weight: 600;
}

.list-body {
  position: relative;
  display: flex;
  flex: 1;
  min-height: 0;
  overflow: hidden;
}

.messages {
  flex: 1;
  list-style: none;
  background-color: #fff;
}

.messages li {
  height: 103px;
  padding: 19px 15px;
  border-bottom: 1px solid var(--line);
}

.messages li:nth-child(even) {
  height: 102px;
}

.messages .tinted {
  background-color: var(--canvas);
}

.messages li.row-cut {
  display: flex;
  align-items: flex-end;
  height: 12px;
  padding: 0 15px 9px;
}

.messages li.row-short {
  height: 51px;
}

.messages .check {
  display: block;
  margin: 5px 6px;
}

.avatar {
  display: flex;
  align-items: center;
  justify-content: center;
  width: 35px;
  height: 35px;
  border-radius: 50%;
  color: #fff;
  font-size: 12px;
  font-weight: 700;
}

.avatar-dark {
  background-color: #222;
}

.avatar-gold {
  background-color: #986f0b;
}

.avatar-grey {
  background-color: #69797e;
}

.avatar-teal {
  background-color: #005b70;
}

.redacted-list {
  position: absolute;
  top: 2px;
  bottom: 1px;
  left: 53px;
  right: 25px;
}

.scrollbar {
  display: flex;
  flex-direction: column;
  align-items: center;
  padding: 8px 0;
}

.arrow-up,
.arrow-down {
  border: 5px solid transparent;
  border-top-width: 0;
  border-bottom: 6px solid #c8c6c4;
}

.arrow-down {
  border-top: 6px solid #c8c6c4;
  border-bottom-width: 0;
}

.thumb {
  width: 8px;
  border-radius: 4px;
  background-color: #c8c6c4;
}

.list-scroll {
  width: 22px;
}

.list-scroll .arrow-up {
  margin-bottom: auto;
}

.list-scroll .thumb {
  height: 48px;
  margin-top: 64px;
}

.list-scroll .arrow-down {
  margin-top: auto;
}

/* Reading pane */
.reading {
  display: flex;
  flex: 1;
  padding: 69px 0 0 10px;
  background-color: var(--canvas);
}

.mail-card {
  position: relative;
  flex: 1;
  height: 615px;
  border: 1px solid #d2d0ce;
  border-radius: 3px;
  background-color: #fff;
}

.redacted-mail {
  position: absolute;
  inset: -57px 10px 8px 5px;
}

.reading-scroll {
  width: 24px;
}

.reading-scroll .thumb {
  flex: 1;
  margin: 15px 0 72px;
}

/* Taskbar */
.taskbar {
  display: flex;
  flex-shrink: 0;
  height: 50px;
  background-color: #1f2522;
  color: #fff;
}

.start {
  justify-content: center;
  width: 60px;
}

.task-search {
  display: flex;
  align-items: center;
  gap: 15px;
  width: 430px;
  padding: 0 14px;
  border: 1px solid #bcbcbc;
  background-color: #f1f1f1;
  color: #1b1b1b;
}

.task-search input {
  flex: 1;
  font-size: 18px;
}

.task-search input::placeholder {
  color: #333;
  opacity: 1;
}

.task-apps {
  display: flex;
}

.task-apps .plain {
  position: relative;
  justify-content: center;
  width: 62px;
}

.running::after {
  content: "";
  position: absolute;
  left: 6px;
  right: 5px;
  bottom: 0;
  height: 3px;
  background-color: #f16a78;
}

.task-apps .current {
  background: linear-gradient(90deg, #4d524f 57px, #3c4240 57px);
}

.current::after {
  left: 0;
  right: 0;
  background: linear-gradient(90deg, #f16a78 57px, #ae4f5b 57px);
}

.stacked::after {
  background: linear-gradient(90deg, #f16a78 40px, #ae4f5b 40px);
}

.tray {
  display: flex;
  align-items: center;
  margin-left: auto;
  padding-right: 5px;
  font-size: 14px;
}

.tray .plain {
  justify-content: center;
  width: 30px;
  height: 100%;
}

.tray .language {
  width: 44px;
  line-height: 22px;
}

.tray .clock {
  width: 92px;
  line-height: 22px;
}

.tray .notice {
  width: 61px;
  padding-right: 10px;
  border-right: 1px solid #777b79;
}
```
